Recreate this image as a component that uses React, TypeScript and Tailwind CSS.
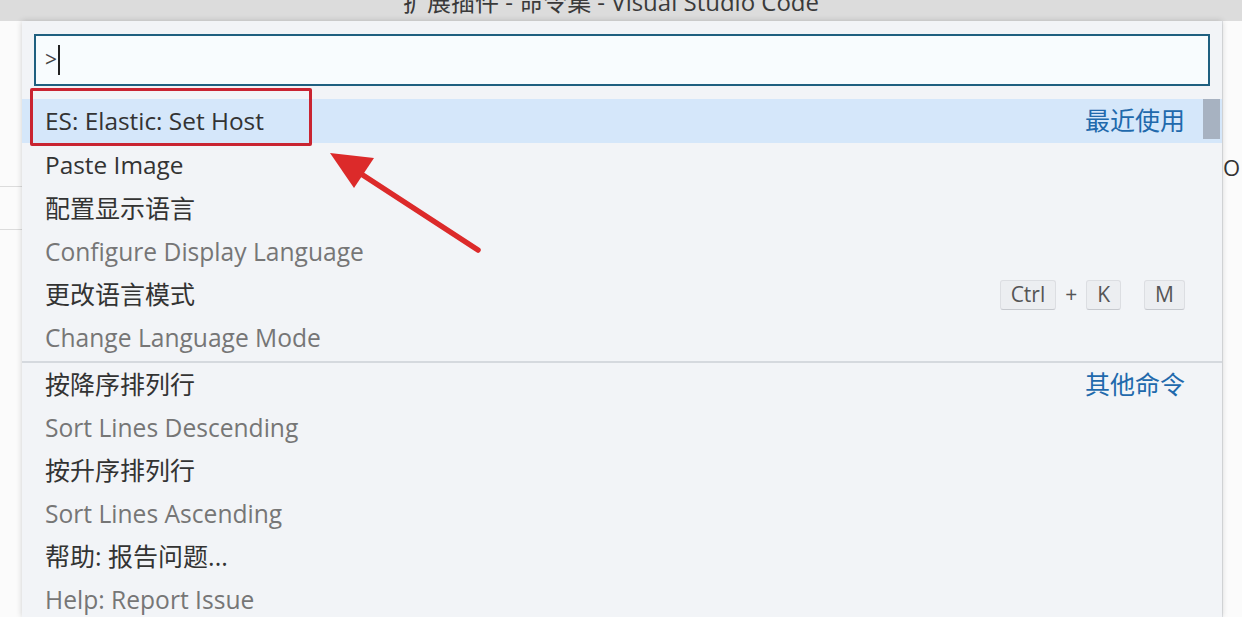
import React from "react";

type Item = {
  label: string;
  detail?: string;
  hint?: string;
  keys?: boolean;
  active?: boolean;
  separator?: boolean;
};

const items: Item[] = [
  { label: "ES: Elastic: Set Host", hint: "最近使用", active: true },
  { label: "Paste Image" },
  { label: "配置显示语言", detail: "Configure Display Language" },
  { label: "更改语言模式", detail: "Change Language Mode", keys: true },
  { label: "按降序排列行", detail: "Sort Lines Descending", hint: "其他命令", separator: true },
  { label: "按升序排列行", detail: "Sort Lines Ascending" },
  { label: "帮助: 报告问题...", detail: "Help: Report Issue" },
];

const font = {
  fontFamily: '"Open Sans", "Noto Sans CJK SC", sans-serif',
};

const isCjk = (s: string) => /[\u4e00-\u9fff]/.test(s);

function Key({ children }: { children: React.ReactNode }) {
  return (
    <span className="inline-flex h-[30px] items-center rounded-[3px] border border-[#dcdee2] border-b-[#c6c9ce] bg-[#eceef1] px-[10px] text-[21px] text-[#555]">
      {children}
    </span>
  );
}

function Row({ item }: { item: Item }) {
  return (
    <div
      className={`flex flex-col ${item.active ? "bg-[#d5e7fa]" : ""} ${
        item.separator ? "mt-[2px] border-t-2 border-[#d5d9de]" : ""
      }`}
    >
      <div className="flex h-[44px] items-center justify-between pl-[23px] pr-[37px]">
        <span className={`${isCjk(item.label) ? "text-[25px]" : "text-[24.4px]"} text-[#333]`}>{item.label}</span>
        {item.hint && <span className="text-[25px] text-[#2169ac]">{item.hint}</span>}
        {item.keys && (
          <div className="flex items-center">
            <Key>Ctrl</Key>
            <span className="mx-[9px] text-[21px] text-[#555]">+</span>
            <Key>K</Key>
            <span className="w-[23px]" />
            <Key>M</Key>
          </div>
        )}
      </div>
      {item.detail && (
        <div className="flex h-[42px] items-center pl-[23px]">
          <span className="text-[24.6px] text-[#767676]">{item.detail}</span>
        </div>
      )}
    </div>
  );
}

export default function App() {
  return (
    <div className="relative h-[617px] w-[1242px] overflow-hidden bg-[#eef2f6]" style={font}>
      {/* title bar, mostly cut off */}
      <div className="flex h-[21px] justify-center overflow-hidden bg-[#dcdcdc] pr-[20px]">
        <span className="-mt-[16px] text-[24px] text-[#3a3a3a]">扩展插件 - 命令集 - Visual Studio Code</span>
      </div>

      <div className="flex h-[596px]">
        {/* editor behind, left */}
        <div className="flex w-[22px] flex-col bg-[#fbfbfb]">
          <div className="h-[165px]" />
          <div className="h-[1px] bg-[#dcdcdc]" />
          <div className="h-[42px]" />
          <div className="h-[1px] bg-[#dcdcdc]" />
        </div>

        {/* quick pick */}
        <div className="relative flex w-[1200px] flex-col bg-[#f2f4f7] shadow-[0_0_6px_rgba(0,0,0,0.18)]">
          <div className="px-[12px] pt-[13px] pb-[13px]">
            <div className="flex h-[52px] items-center border-2 border-[#1f6080] bg-[#f8fcfe] pl-[9px]">
              <span className="text-[21px] text-[#444]">&gt;</span>
              <span className="ml-[1px] h-[30px] w-[2px] bg-[#222]" />
            </div>
          </div>
          <div className="flex flex-col">
            {items.map((it) => (
              <Row key={it.label} item={it} />
            ))}
          </div>
          {/* scrollbar thumb */}
          <div className="absolute right-[2px] top-[78px] h-[40px] w-[17px] bg-[#a7b2c1]" />
        </div>

        {/* editor behind, right */}
        <div className="flex w-[20px] flex-col border-l border-[#e2e4e7] bg-[#fbfbfb]">
          <span className="mt-[130px] text-[22px] text-[#333]">O</span>
        </div>
      </div>

      {/* annotation */}
      <div className="absolute left-[30px] top-[88px] h-[58px] w-[282px] rounded-[2px] border-[3px] border-[#c92431]" />
      <svg className="absolute left-0 top-0" width="1242" height="617" viewBox="0 0 1242 617">
        <line x1="478" y1="250" x2="352" y2="168" stroke="#dc2a2a" strokeWidth="5.5" strokeLinecap="round" />
        <polygon points="330,153 374,158 354,188" fill="#dc2a2a" />
      </svg>
    </div>
  );
}
